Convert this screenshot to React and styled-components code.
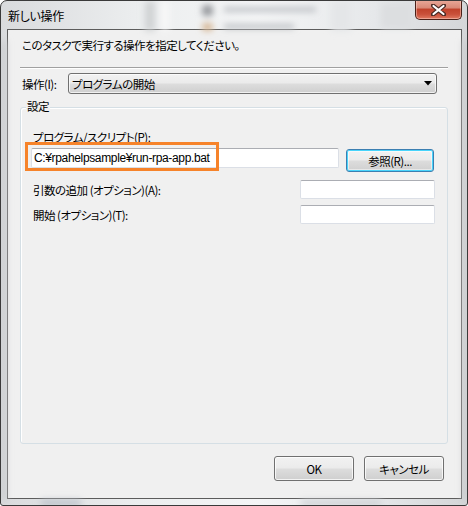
import React from "react";
import styled, { createGlobalStyle } from "styled-components";

const Global = createGlobalStyle`
  html, body { margin: 0; padding: 0; background: #ffffff; }
  body { font-family: "Noto Sans CJK JP", "Noto Sans", sans-serif; }
  * { box-sizing: border-box; }
`;

const FONT = `"Noto Sans CJK JP", "Noto Sans", sans-serif`;

const Window = styled.div`
  position: relative;
  width: 468px;
  height: 506px;
  border: 1px solid #3a3a3a;
  border-radius: 7px 7px 3px 3px;
  background: linear-gradient(90deg, #d9dbdd 0%, #eceeef 30%, #f4f5f6 55%, #e6e8ea 80%, #d4d6d8 100%);
  padding: 0 5px 6px 6px;
  display: flex;
  flex-direction: column;
  overflow: hidden;
  font-family: ${FONT};
  font-feature-settings: "palt";
  color: #000;
`;

const GlassArt = styled.svg`
  position: absolute;
  left: 0;
  top: 0;
  pointer-events: none;
`;

const TitleBar = styled.div`
  position: relative;
  height: 28px;
  display: flex;
  justify-content: space-between;
  align-items: flex-start;
`;

const Title = styled.div`
  margin: 7px 0 0 1px;
  font-size: 12px;
  line-height: 16px;
  letter-spacing: -0.3px;
`;

const CloseButton = styled.div`
  width: 47px;
  height: 20px;
  margin-top: -1px;
  border: 1px solid #4a2018;
  border-top: none;
  border-radius: 0 0 5px 5px;
  background: linear-gradient(180deg, #e9a99a 0%, #d98a78 40%, #c1432c 50%, #c9503a 75%, #e07a62 100%);
  box-shadow: inset 0 0 0 1px rgba(255, 220, 210, 0.45);
  display: flex;
  align-items: center;
  justify-content: center;
`;

const Client = styled.div`
  flex: 1;
  border: 1px solid #5c5c5c;
  background: #f0f0f0;
  padding: 7px 13px 17px 12px;
  display: flex;
  flex-direction: column;
  font-size: 11.5px;
  line-height: 16px;
  letter-spacing: -0.5px;
`;

const Instruction = styled.div`
  margin-left: 2px;
`;

const Separator = styled.div`
  margin-top: 14px;
  height: 2px;
  border-top: 1px solid #a0a0a0;
  border-bottom: 1px solid #ffffff;
`;

const ComboRow = styled.div`
  margin-top: 4px;
  display: flex;
  align-items: center;
  margin-right: 11px;
`;

const Label = styled.div`
  margin-left: ${(p) => p.$indent || 0}px;
  width: ${(p) => (p.$width ? `${p.$width}px` : "auto")};
  white-space: nowrap;
`;

const Combo = styled.div`
  flex: 1;
  height: 21px;
  border: 1px solid #707070;
  border-radius: 3px;
  background: linear-gradient(180deg, #f2f2f2 0%, #ebebeb 48%, #dddddd 52%, #cfcfcf 100%);
  box-shadow: inset 0 0 0 1px rgba(255, 255, 255, 0.7);
  display: flex;
  align-items: center;
  justify-content: space-between;
  padding: 0 4px 0 3px;
`;

const Group = styled.div`
  position: relative;
  margin-top: 13px;
  height: 337px;
  border: 1px solid #d5dfe5;
  border-radius: 3px;
  box-shadow: inset 1px 1px 0 #ffffff;
  padding: 21px 12px 0 0;
  display: flex;
  flex-direction: column;
`;

const Legend = styled.div`
  position: absolute;
  left: 5px;
  top: -10px;
  padding: 0 1px;
  background: #f0f0f0;
`;

const InputRow = styled.div`
  margin-top: 3px;
  display: flex;
  align-items: flex-start;
`;

const FieldWrap = styled.div`
  position: relative;
  margin-left: ${(p) => p.$indent || 0}px;
`;

const TextBox = styled.div`
  width: ${(p) => p.$width}px;
  height: ${(p) => p.$height || 19}px;
  background: #ffffff;
  border: 1px solid #dbdfe6;
  border-top-color: #abadb3;
  border-radius: 2px;
  padding: 0 2px;
  display: flex;
  align-items: center;
  font-family: "Liberation Sans", "Noto Sans CJK JP", sans-serif;
  font-size: 12px;
  letter-spacing: -0.35px;
  white-space: nowrap;
`;

const Highlight = styled.div`
  position: absolute;
  left: -6px;
  top: -6px;
  width: 194px;
  height: 29px;
  border: 3px solid #f6832a;
  pointer-events: none;
`;

const Button = styled.div`
  width: ${(p) => p.$width || 80}px;
  height: ${(p) => p.$height || 25}px;
  margin-left: ${(p) => p.$ml || 0}px;
  margin-top: ${(p) => p.$mt || 0}px;
  border: 1px solid ${(p) => (p.$focused ? "#3c7fb1" : "#707070")};
  border-radius: 3px;
  background: linear-gradient(180deg, #f2f2f2 0%, #ebebeb 48%, #dddddd 52%, #cfcfcf 100%);
  box-shadow: ${(p) =>
    p.$focused
      ? "inset 0 0 0 1px #48d4fb, inset 0 0 0 2px rgba(255,255,255,0.5)"
      : "inset 0 0 0 1px rgba(255,255,255,0.75)"};
  display: flex;
  align-items: center;
  justify-content: center;
`;

const FieldRow = styled.div`
  margin-top: ${(p) => p.$mt}px;
  display: flex;
  align-items: center;
  justify-content: space-between;
`;

const ButtonRow = styled.div`
  margin-top: auto;
  margin-right: 4px;
  display: flex;
  justify-content: flex-end;
  gap: 10px;
`;

export default function App() {
  return (
    <>
      <Global />
      <Window>
        <GlassArt width="468" height="506" viewBox="0 0 468 506">
          <defs>
            <filter id="bl" x="-50%" y="-50%" width="200%" height="200%">
              <feGaussianBlur stdDeviation="3" />
            </filter>
            <filter id="bl2" x="-50%" y="-50%" width="200%" height="200%">
              <feGaussianBlur stdDeviation="3.5" />
            </filter>
          </defs>
          <g filter="url(#bl2)">
            <rect x="144" y="0" width="10" height="30" fill="#cfd1d3" />
            <rect x="160" y="0" width="8" height="30" fill="#f8f8f8" />
            <rect x="330" y="0" width="20" height="30" fill="#e4e6e8" />
            <rect x="0" y="40" width="5" height="460" fill="#c8cacc" />
            <rect x="462" y="40" width="5" height="460" fill="#c8cacc" />
            <rect x="40" y="499" width="40" height="6" fill="#b9c0c8" />
            <rect x="300" y="499" width="80" height="6" fill="#cdd0d4" />
          </g>
          <g filter="url(#bl)">
            <rect x="201" y="4" width="11" height="11" rx="3" fill="#9a9ca0" />
            <rect x="223" y="6" width="92" height="5" fill="#c0c3c7" />
            <rect x="201" y="22" width="11" height="8" rx="3" fill="#d6b796" />
            <rect x="223" y="23" width="70" height="5" fill="#bfc2c6" />
            <rect x="380" y="3" width="30" height="24" fill="#dcdee0" />
          </g>
        </GlassArt>
        <TitleBar>
          <Title>新しい操作</Title>
          <CloseButton>
            <svg width="15" height="12" viewBox="0 0 15 12">
              <path
                d="M2 1.5 L7.5 6 L13 1.5 M2 10.5 L7.5 6 L13 10.5"
                stroke="#4a2a24"
                strokeWidth="4.2"
                fill="none"
                strokeLinecap="round"
              />
              <path
                d="M2.5 2 L7.5 6 L12.5 2 M2.5 10 L7.5 6 L12.5 10"
                stroke="#ffffff"
                strokeWidth="2.2"
                fill="none"
                strokeLinecap="round"
              />
            </svg>
          </CloseButton>
        </TitleBar>
        <Client>
          <Instruction>このタスクで実行する操作を指定してください。</Instruction>
          <Separator />
          <ComboRow>
            <Label $indent={2} $width={46}>操作(I):</Label>
            <Combo>
              <span>プログラムの開始</span>
              <svg width="8" height="5" viewBox="0 0 8 5">
                <path d="M0 0 H8 L4 4.5 Z" fill="#000" />
              </svg>
            </Combo>
          </ComboRow>
          <Group>
            <Legend>設定</Legend>
            <Label $indent={12}>プログラム/スクリプト(P):</Label>
            <InputRow>
              <FieldWrap $indent={10}>
                <TextBox $width={308} $height={20}>C:¥rpahelpsample¥run-rpa-app.bat</TextBox>
                <Highlight />
              </FieldWrap>
              <Button $focused $width={88} $height={23} $ml={7} $mt={1}>
                参照(R)...
              </Button>
            </InputRow>
            <FieldRow $mt={8}>
              <Label $indent={12}>引数の追加 (オプション)(A):</Label>
              <TextBox $width={135} />
            </FieldRow>
            <FieldRow $mt={6}>
              <Label $indent={12}>開始 (オプション)(T):</Label>
              <TextBox $width={135} />
            </FieldRow>
          </Group>
          <ButtonRow>
            <Button>OK</Button>
            <Button>キャンセル</Button>
          </ButtonRow>
        </Client>
      </Window>
    </>
  );
}
